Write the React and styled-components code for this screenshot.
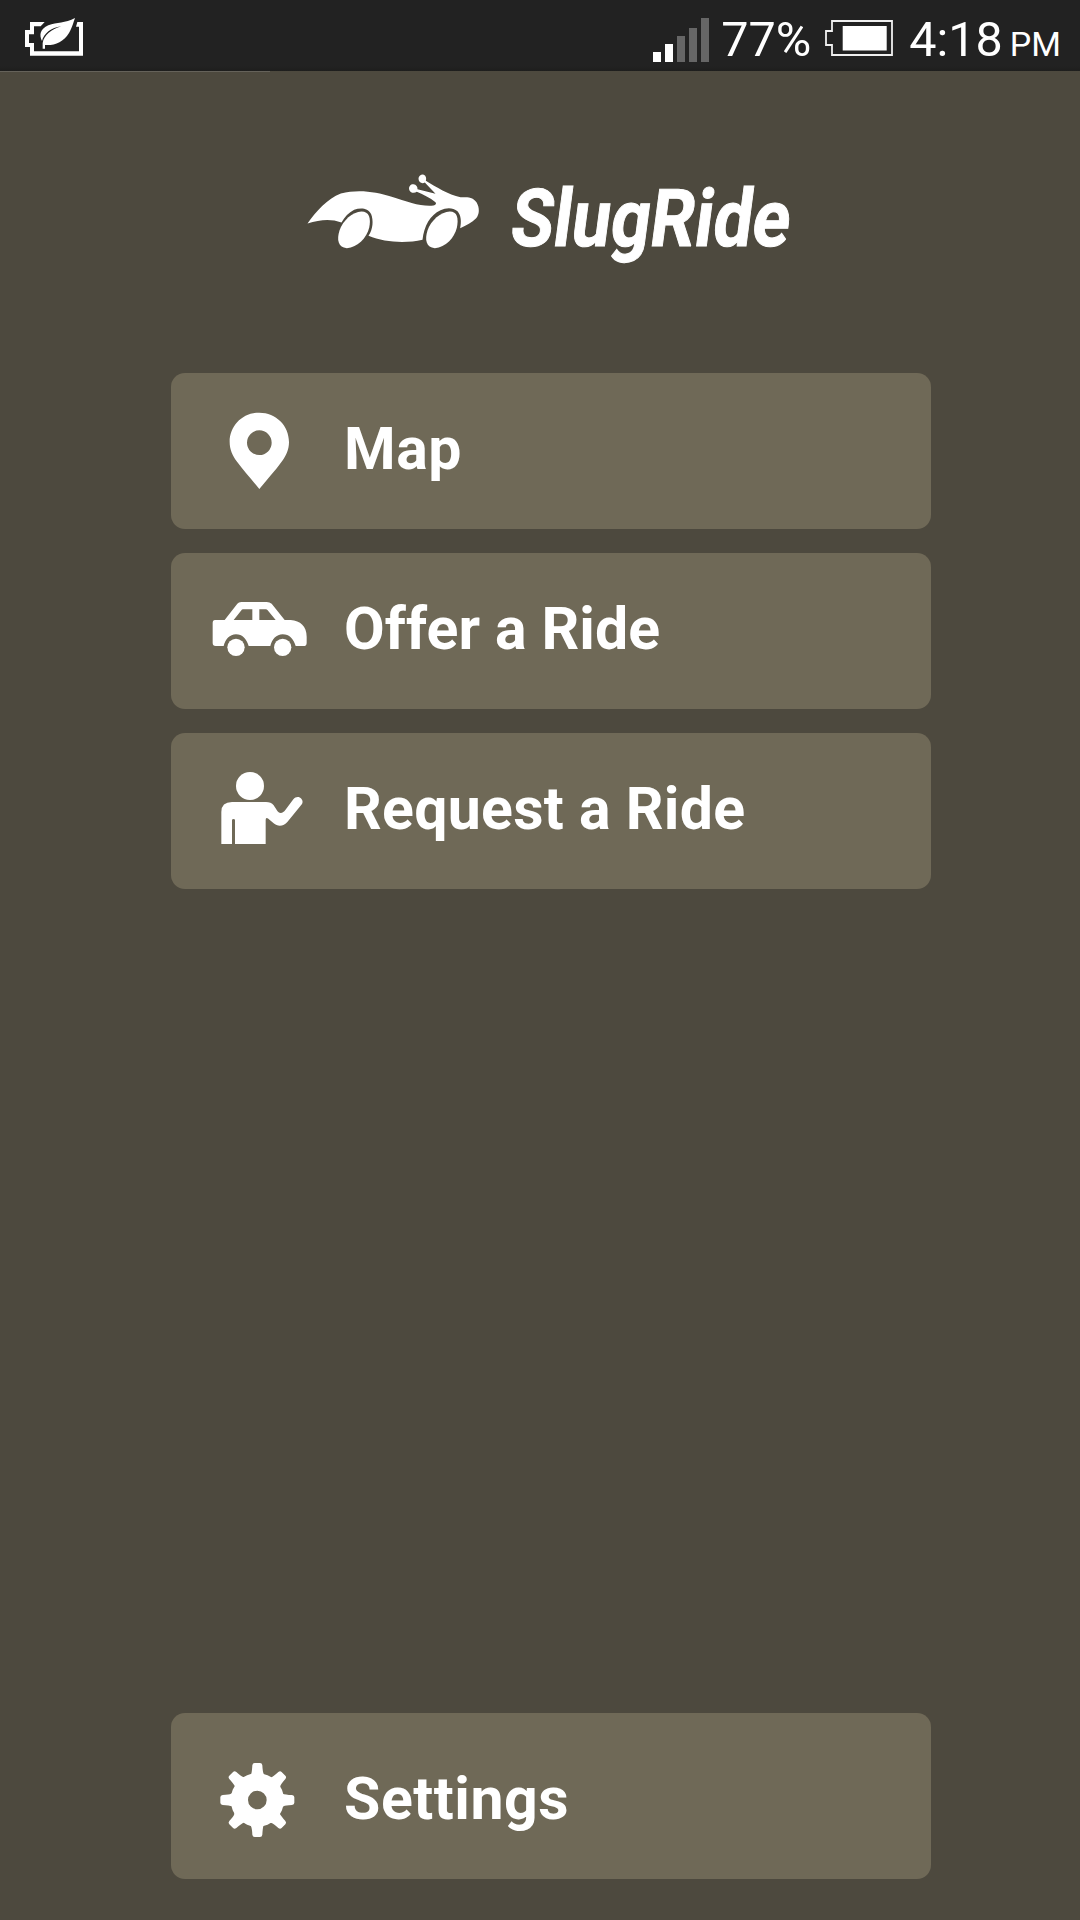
import React from 'react';
import styled, { createGlobalStyle } from 'styled-components';

const GlobalStyle = createGlobalStyle`
  * { box-sizing: border-box; }
  body { margin: 0; background: #4d493e; font-family: Roboto, "Liberation Sans", sans-serif; color: #fff; }
`;

const Screen = styled.div`
  width: 1080px;
  height: 1920px;
  display: flex;
  flex-direction: column;
  background: #4d493e;
  overflow: hidden;
`;

const StatusBar = styled.header`
  height: 71px;
  flex: none;
  display: flex;
  align-items: center;
  justify-content: space-between;
  padding: 0 19px 0 25px;
  background: linear-gradient(#222 0, #222 66px, #1e1e1d 71px);
`;

const StatusGroup = styled.div`
  display: flex;
  align-items: center;
`;

const StatusIcon = styled.svg`
  display: block;
  flex: none;
  margin-top: ${p => p.$top || 0}px;
  margin-right: ${p => p.$gap || 0}px;
`;

const StatusText = styled.span`
  font-size: ${p => p.$size}px;
  line-height: 71px;
  height: 71px;
  padding-top: ${p => p.$drop || 0}px;
  margin-right: ${p => p.$gap || 0}px;
  white-space: nowrap;
`;

const LoadLine = styled.div`
  width: 270px;
  height: 1px;
  flex: none;
  background: #65625a;
`;

const Brand = styled.div`
  display: flex;
  align-items: flex-start;
  height: 301px;
  padding: 101px 0 0 307px;
`;

const BrandName = styled.h1`
  margin: -14px 0 0 27px;
  font-size: 80px;
  line-height: 120px;
  font-weight: 700;
  white-space: nowrap;
  -webkit-text-stroke: 1px #fff;
  transform-origin: 0 88px;
  transform: skewX(-7.5deg) scaleX(0.868);
`;

const Menu = styled.nav`
  flex: 1;
  display: flex;
  flex-direction: column;
  gap: 24px;
  padding: 0 149px 41px 171px;
`;

const MenuButton = styled.button`
  display: flex;
  align-items: center;
  width: 760px;
  height: ${p => (p.$last ? 166 : 156)}px;
  margin: ${p => (p.$last ? 'auto 0 0' : '0')};
  padding: ${p => (p.$last ? 8 : 0)}px 0 0 36px;
  border: 0;
  border-radius: 14px;
  background: #6f6957;
  color: #fff;
  font: 700 59px Roboto, "Liberation Sans", sans-serif;
  text-align: left;
`;

const Glyph = styled.svg`
  display: block;
  width: 104px;
  height: 100px;
  flex: none;
`;

const Label = styled.span`
  margin: 0 0 ${p => (p.$low ? 2 : 4)}px 33px;
  line-height: 80px;
  letter-spacing: ${p => p.$track || 0}px;
  white-space: nowrap;
`;

const PowerSaver = () => (
  <StatusIcon width="60" height="40" viewBox="75 45 180 120" $top={1}>
    <path d="M134 63H90V87H75V138H90V164H249V63H232L228 77H237V151H102V126H87V100H102V76H122Z" fill="#fff" />
    <path d="M225 51C195 68 171 62 145 73C120 84 117 102 126 120C131 98 153 80 184 76C154 85 132 103 128 126V143H135V132C164 134 190 124 207 96C218 77 220 64 225 51Z" fill="#fff" />
  </StatusIcon>
);

const Signal = () => (
  <StatusIcon width="56" height="44" viewBox="0 0 56 44" $gap={12} $top={9}>
    <path d="M0 34h8v10H0zM12 26h8v18h-8z" fill="#fff" />
    <path d="M24 18h8v26h-8zM36 10h8v34h-8zM48 0h8v44h-8z" fill="#666" />
  </StatusIcon>
);

const Battery = () => (
  <StatusIcon width="68" height="36" viewBox="0 0 68 36" $gap={16} $top={4}>
    <path d="M7 1H67V35H7V25H1V11H7Z" fill="none" stroke="#f0f0f0" strokeWidth="1.8" />
    <path d="M17.7 6h44v24.5h-44z" fill="#fff" />
  </StatusIcon>
);

const SlugCar = () => (
  <svg width="174" height="77" viewBox="51.5 38.5 522 231" fill="#fff">
    <path d="M53 190C78 154 112 116 153 100C205 86 260 95 303 109C355 126 395 140 431 136Q442 132 437 126C420 113 402 104 381 95C373 101 360 98 358 88C356 77 364 71 371 72C379 73 384 80 383 87L437 101L405 67C397 73 386 66 386 56C386 48 392 43 399 43C407 44 411 53 408 62C440 81 475 104 512 111C535 111 548 110 560 126C570 143 569 162 559 174C546 188 530 194 511 204C515 184 514 166 503 153C489 141 469 142 452 150C421 165 403 196 398 239C350 250 285 248 236 227C250 206 251 180 244 162C234 143 212 142 193 149C176 158 165 170 155 187C123 175 91 178 53 190Z" />
    <path d="M215 154C238 154 244 174 238 203C231 233 203 262 171 264C145 262 140 239 149 211C159 181 188 155 215 154Z" />
    <path d="M480 154C502 154 507 174 501 203C494 233 467 262 435 264C409 262 404 239 413 211C423 181 453 155 480 154Z" />
  </svg>
);

const PinIcon = () => (
  <Glyph viewBox="141 123 312 300" fill="#fff">
    <path fillRule="evenodd" d="M298 158C348 158 387 197 387 246C387 269 378 287 366 304C345 333 320 360 298 387C276 360 251 333 230 304C218 287 209 269 209 246C209 197 248 158 298 158ZM298 211A37 37 0 1 0 298 285A37 37 0 1 0 298 211Z" />
  </Glyph>
);

const CarIcon = () => (
  <Glyph viewBox="141 123 312 300" fill="#fff">
    <path fillRule="evenodd" d="M165 240H194L232 191Q236 186 244 186H320Q329 186 335 191L374 240H392C421 242 440 259 440 290V308Q440 318 431 318H407C401 297 388 283 368 283C349 283 336 298 331 318H266C260 297 247 283 228 283C209 283 196 298 191 318H167Q158 318 158 309V249Q158 240 165 240ZM221 240H277V208H249Q246 208 243 212ZM298 240H347L323 211Q321 208 317 208H298Z" />
    <circle cx="228" cy="322" r="26" />
    <circle cx="368" cy="322" r="26" />
  </Glyph>
);

const PersonIcon = () => (
  <Glyph viewBox="141 123 312 300" fill="#fff">
    <circle cx="270" cy="198" r="42" />
    <path d="M184 372V276Q184 246 216 246H318Q333 246 341 256C349 267 353 279 362 279C368 279 372 275 376 270L400 238C407 229 418 229 424 236C430 243 428 250 423 256L382 306C372 319 353 321 341 310L325 296Q317 291 317 300V372H225V301Q225 297 220.500 297Q216 297 216 301V372Z" />
  </Glyph>
);

const GearIcon = () => {
  const tooth = 'M264 240L273 225Q276 216 277 196Q278 189 284 189H300Q306 189 307 196Q308 216 311 221L322 240Z';
  return (
    <Glyph viewBox="141 150 312 300" fill="#fff">
      <path fillRule="evenodd" d="M292 220A80 80 0 1 0 292 380A80 80 0 1 0 292 220ZM292 272A28 28 0 1 1 292 328A28 28 0 1 1 292 272Z" />
      {[0, 45, 90, 135, 180, 225, 270, 315].map(a => (
        <path key={a} d={tooth} transform={`rotate(${a} 292 300)`} />
      ))}
    </Glyph>
  );
};

export default function App() {
  return (
    <Screen>
      <GlobalStyle />
      <StatusBar>
        <PowerSaver />
        <StatusGroup>
          <Signal />
          <StatusText $size={48.5} $gap={14} $drop={4}>77%</StatusText>
          <Battery />
          <StatusText $size={48.5} $gap={7} $drop={4}>4:18</StatusText>
          <StatusText $size={34} $drop={9}>PM</StatusText>
        </StatusGroup>
      </StatusBar>
      <LoadLine />
      <Brand>
        <SlugCar />
        <BrandName>SlugRide</BrandName>
      </Brand>
      <Menu>
        <MenuButton><PinIcon /><Label $track={0.5}>Map</Label></MenuButton>
        <MenuButton><CarIcon /><Label $track={0.1}>Offer a Ride</Label></MenuButton>
        <MenuButton><PersonIcon /><Label $track={0.27}>Request a Ride</Label></MenuButton>
        <MenuButton $last><GearIcon /><Label $low $track={0.55}>Settings</Label></MenuButton>
      </Menu>
    </Screen>
  );
}
